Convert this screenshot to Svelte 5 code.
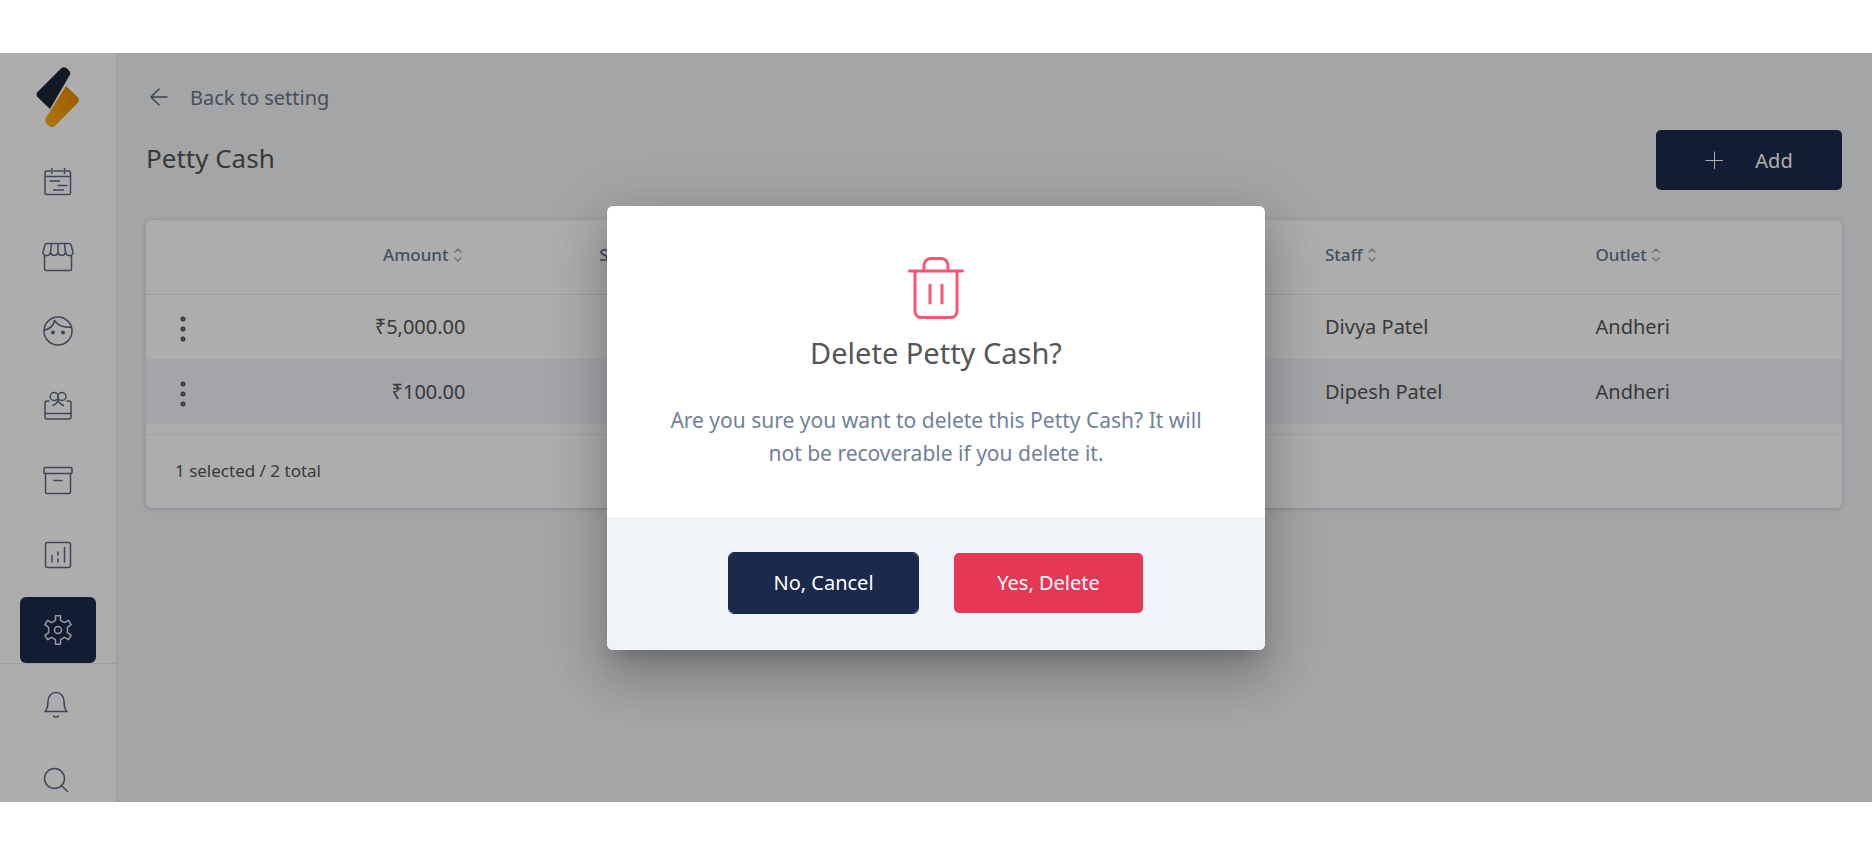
<script>
  const rows = [
    { amount: '₹5,000.00', staff: 'Divya Patel', outlet: 'Andheri', selected: false },
    { amount: '₹100.00', staff: 'Dipesh Patel', outlet: 'Andheri', selected: true }
  ];
  const nav = ['Calendar', 'Store', 'Clients', 'Gifts', 'Inventory', 'Reports', 'Settings'];
  let open = $state(true);
</script>

{#snippet sorter()}
  <svg class="sort" width="8" height="14" viewBox="0 0 8 14" aria-hidden="true">
    <path d="M1 4 4 1l3 3M1 10l3 3 3-3" />
  </svg>
{/snippet}

{#snippet icon(name)}
  <svg class="icon" width="32" height="32" viewBox="0 0 32 32" aria-hidden="true">
    {#if name === 'Calendar'}
      <path d="M8.500 5H4.500a1.500 1.500 0 0 0-1.500 1.500v20.500a1.500 1.500 0 0 0 1.500 1.500h22.500a1.500 1.500 0 0 0 1.500-1.500V6.500a1.500 1.500 0 0 0-1.500-1.500h-3M12 5h9M10 2.500v5M22.500 2.500v5M3 10.500h25.500M8 15h9.500M16 19.500h9M11.500 24h10" />
    {:else if name === 'Store'}
      <path d="M4.500 2.500h23q1 0 1.500 1.500l2 7c.5 4.500-6 5-7.500.5-1 4-6.500 4-7.500 0-1 4-6.500 4-7.500 0C7 16 .5 15.500 1 11l2-7q.5-1.500 1.500-1.500zM9.500 2.500l-1 9M16 2.500v9M22.500 2.500l1 9M2.500 14.500V28a1.500 1.500 0 0 0 1.500 1.500h24a1.500 1.500 0 0 0 1.500-1.500V14.500" />
    {:else if name === 'Clients'}
      <circle cx="16" cy="16" r="14" />
      <path d="M2.500 15C8 14 11.500 10.500 12.500 5.500 16 10.500 22 13 29.500 12" />
      <circle class="solid" cx="11" cy="17.500" r="2" />
      <circle class="solid" cx="21" cy="17.500" r="2" />
    {:else if name === 'Gifts'}
      <path d="M7 11h-2a2 2 0 0 0-2 2V27a2 2 0 0 0 2 2h22a2 2 0 0 0 2-2V13a2 2 0 0 0-2-2h-2M3 23.500h26M11 15.500c3-1.500 5-4 5-6M21.500 15.500c-3-1.500-5.500-4-5.500-6" />
      <ellipse cx="12.200" cy="6.500" rx="4" ry="4" />
      <ellipse cx="20" cy="6.500" rx="4" ry="4" />
    {:else if name === 'Inventory'}
      <rect x="2" y="2.500" width="28" height="6" rx="1" />
      <path d="M3.500 8.500V27a1.500 1.500 0 0 0 1.500 1.500h22a1.500 1.500 0 0 0 1.500-1.500V8.500M12 15.500h8" />
    {:else if name === 'Reports'}
      <rect x="3.500" y="3.500" width="25" height="25" rx="2" />
      <path d="M10 16.500v6.500M16 13v3M16 20v3M22.500 8.500V23" />
    {:else if name === 'Settings'}
      <path d="M13.500 1.800h5v4.500l4 2.300 3.900-2.300 2.700 4.400-3.700 2.600v5.400l3.700 2.600-2.700 4.400-3.900-2.300-4 2.300v4.500h-5v-4.500l-4-2.300-3.900 2.300-2.700-4.400 3.700-2.600v-5.400l-3.700-2.600 2.700-4.400 3.900 2.300 4-2.300z" />
      <circle cx="16" cy="16" r="3.500" />
    {:else if name === 'Notifications'}
      <path d="M3 22.500c3-3 3-6.500 3-10.500 0-4.500 3.500-8.500 8-8.500s8 4 8 8.500c0 4 0 7.500 3 10.500zM11.500 27c1.500 1.500 3.500 1.500 5 0" />
    {:else}
      <circle cx="12.500" cy="13.500" r="10" />
      <path d="m20 21 5.500 5.500" />
    {/if}
  </svg>
{/snippet}

<div class="frame">
  <aside class="sidebar">
    <svg class="logo" width="44" height="62" viewBox="0 0 44 62" role="img" aria-label="Home">
      <defs>
        <linearGradient id="flame" x1="0" y1="1" x2="1" y2="0">
          <stop offset="0" stop-color="#fdb515" />
          <stop offset="1" stop-color="#e88000" />
        </linearGradient>
      </defs>
      <path fill="#1b2436" d="M25 1.500q3-2.500 6 0l2.500 2.500q1.500 2 0 4.500L14 42 1.500 30q-2-2.500 0-5z" />
      <path fill="url(#flame)" d="M30 19 42 30.500q2 2.500 0 5L19 59q-3 2.500-6 0l-2.500-2.500q-2-2-1-5z" />
    </svg>
    <nav class="nav" aria-label="Main">
      {#each nav as name}
        <button class="item" class:active={name === 'Settings'} aria-label={name}>{@render icon(name)}</button>
      {/each}
    </nav>
    <div class="tools">
      <button class="item" aria-label="Notifications">{@render icon('Notifications')}</button>
      <button class="item" aria-label="Search">{@render icon('Search')}</button>
    </div>
  </aside>

  <main class="main">
    <a class="back" href="#settings">
      <svg width="18" height="18" viewBox="0 0 18 18" aria-hidden="true"><path d="M17 9H1M9 1 1 9l8 8" /></svg>
      Back to setting
    </a>
    <header class="heading">
      <h1>Petty Cash</h1>
      <button class="btn add">
        <svg width="18" height="18" viewBox="0 0 18 18" aria-hidden="true"><path d="M9.500 1v17M1 9.500h17" /></svg>
        Add
      </button>
    </header>

    <section class="card">
      <table>
        <colgroup>
          <col class="c-menu" /><col /><col /><col /><col /><col /><col />
        </colgroup>
        <thead>
          <tr>
            <th></th>
            <th class="num head-num">Amount{@render sorter()}</th>
            <th class="mid">Status</th>
            <th></th>
            <th></th>
            <th>Staff{@render sorter()}</th>
            <th>Outlet{@render sorter()}</th>
          </tr>
        </thead>
        <tbody>
          {#each rows as row}
            <tr class:selected={row.selected}>
              <td>
                <button class="kebab" aria-label="Row actions">
                  <svg width="6" height="28" viewBox="0 0 6 28" aria-hidden="true">
                    <circle cx="3" cy="4" r="1.500" /><circle cx="3" cy="14" r="1.500" /><circle cx="3" cy="24" r="1.500" />
                  </svg>
                </button>
              </td>
              <td class="num">{row.amount}</td>
              <td></td>
              <td></td>
              <td></td>
              <td>{row.staff}</td>
              <td>{row.outlet}</td>
            </tr>
          {/each}
        </tbody>
      </table>
      <footer class="count">1 selected / 2 total</footer>
    </section>
  </main>

  {#if open}
    <div class="backdrop">
      <div class="modal" role="alertdialog" aria-modal="true" aria-labelledby="dlg-title" aria-describedby="dlg-text">
        <div class="body">
          <svg width="56" height="64" viewBox="0 0 56 64" aria-hidden="true">
            <path d="M1.500 15h53M16 15V9.500a7 7 0 0 1 7-7h10a7 7 0 0 1 7 7V15M7 15v40.500a6 6 0 0 0 6 6h30a6 6 0 0 0 6-6V15M22 29v18M34 29v18" />
          </svg>
          <h2 id="dlg-title">Delete Petty Cash?</h2>
          <p id="dlg-text">Are you sure you want to delete this Petty Cash? It will not be recoverable if you delete it.</p>
        </div>
        <div class="actions">
          <button class="btn cancel" onclick={() => (open = false)}>No, Cancel</button>
          <button class="btn danger" onclick={() => (open = false)}>Yes, Delete</button>
        </div>
      </div>
    </div>
  {/if}
</div>

<style>
  :global(body) {
    background: #fff;
    font-family: 'Noto Sans', 'Open Sans', sans-serif;
  }
  :global(*) {
    box-sizing: border-box;
  }
  button {
    font: inherit;
    border: 0;
    padding: 0;
    background: none;
    cursor: pointer;
  }
  svg {
    display: block;
    fill: none;
    stroke-linecap: round;
    stroke-linejoin: round;
    flex: none;
  }
  .frame {
    position: relative;
    display: flex;
    margin: 53px 0;
    min-height: calc(100vh - 106px);
    background: #f0f3f6;
    overflow: hidden;
  }
  .sidebar {
    display: flex;
    flex-direction: column;
    width: 117px;
    flex: none;
    background: #fff;
    border-right: 1px solid #dfe3e8;
  }
  .logo {
    margin: 14px auto 20px 36px;
  }
  .nav {
    flex: 1;
    display: flex;
    flex-direction: column;
    justify-content: space-between;
    align-items: center;
    border-bottom: 1px solid #e6e9ed;
  }
  .item {
    display: grid;
    place-items: center;
    flex: none;
    width: 76px;
    height: 66px;
    border-radius: 6px;
  }
  .icon {
    stroke: #5b6980;
    stroke-width: 1.500;
  }
  .icon .solid {
    fill: #5b6980;
    stroke: none;
  }
  .active {
    background: #1b2a4b;
  }
  .active .icon {
    stroke: #dfe3ea;
  }
  .tools {
    display: flex;
    flex-direction: column;
    align-items: center;
    gap: 10px;
    height: 138px;
    padding-top: 8px;
    overflow: hidden;
  }
  .main {
    flex: 1;
    min-width: 0;
    padding: 24px 30px 24px 29px;
  }
  .back {
    display: flex;
    align-items: center;
    gap: 22px;
    width: fit-content;
    height: 40px;
    padding-left: 4px;
    font-size: 20px;
    color: #6a7484;
    text-decoration: none;
  }
  .back svg {
    stroke: #5b6472;
    stroke-width: 1.500;
  }
  .heading {
    display: flex;
    justify-content: space-between;
    align-items: center;
    margin: 13px 0 30px;
  }
  h1 {
    margin: 0 0 4px;
    font-size: 26px;
    line-height: 36px;
    font-weight: 400;
    color: #555;
  }
  .btn {
    height: 60px;
    border-radius: 5px;
    font-size: 20px;
    color: #fff;
    background: #1b2a4b;
  }
  .add {
    display: flex;
    justify-content: center;
    align-items: center;
    gap: 32px;
    width: 186px;
  }
  .add svg {
    stroke: #fff;
    stroke-width: 1;
  }
  .card {
    background: #fff;
    border-radius: 6px;
    box-shadow: 0 1px 5px rgba(40, 60, 90, 0.2);
    overflow: hidden;
  }
  table {
    width: 100%;
    table-layout: fixed;
    border-collapse: collapse;
    margin-bottom: 10px;
  }
  .c-menu {
    width: 73px;
  }
  th {
    height: 74px;
    padding: 0 24px 4px;
    border-bottom: 1px solid #e6e9ed;
    font-size: 17px;
    font-weight: 500;
    text-align: left;
    color: #627692;
  }
  td {
    height: 65px;
    padding: 0 24px;
    font-size: 20px;
    color: #555;
  }
  .sort {
    display: inline-block;
    margin-left: 5px;
    vertical-align: -1px;
    stroke: #a9a9a9;
    stroke-width: 1.500;
  }
  .num {
    text-align: right;
  }
  .head-num {
    padding-right: 28px;
  }
  .mid {
    text-align: center;
  }
  .selected {
    background: #f0f3fa;
  }
  .kebab {
    display: grid;
    place-items: end center;
    width: 26px;
    height: 32px;
  }
  .kebab circle {
    stroke: #555;
    stroke-width: 2;
  }
  .count {
    display: flex;
    align-items: center;
    height: 74px;
    padding: 0 29px 2px;
    border-top: 1px solid #eef0f2;
    font-size: 17px;
    color: #555;
  }
  .backdrop {
    position: absolute;
    inset: 0;
    display: grid;
    place-items: center;
    background: rgba(0, 0, 0, 0.32);
  }
  .modal {
    width: 658px;
    max-width: 90%;
    border-radius: 6px;
    background: #fff;
    overflow: hidden;
    text-align: center;
    box-shadow:
      0 13px 18px -9px rgba(0, 0, 0, 0.2),
      0 29px 46px 4px rgba(0, 0, 0, 0.14),
      0 11px 56px 10px rgba(0, 0, 0, 0.12);
  }
  .body {
    display: flex;
    flex-direction: column;
    align-items: center;
    padding: 50px 48px 47px;
  }
  .body svg {
    stroke: #fa5672;
    stroke-width: 3;
  }
  h2 {
    margin: 13px 0 31px;
    font-size: 29px;
    line-height: 40px;
    font-weight: 400;
    color: #555;
  }
  p {
    margin: 0;
    font-size: 21px;
    line-height: 33px;
    color: #6f819c;
  }
  .actions {
    display: flex;
    justify-content: center;
    gap: 36px;
    padding: 36px 36px 37px;
    background: #f0f4f9;
  }
  .actions .btn {
    width: 189px;
  }
  .cancel {
    outline: 1px solid #1b2a4b;
  }
  .danger {
    background: #e63757;
  }
</style>
